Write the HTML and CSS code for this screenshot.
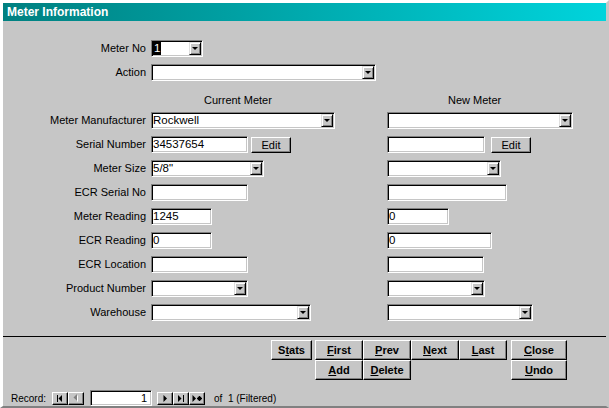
FILE: index.html
```html
<!DOCTYPE html>
<html lang="en">

<head>
    <meta charset="UTF-8">
    <meta name="viewport" content="width=device-width, initial-scale=1.0">
    <title>Meter Information</title>
    <link rel="stylesheet" href="styles.css">
</head>

<body>
    <div class="window">
        <div class="titlebar">Meter Information</div>

        <div class="form">
            <div class="label">Meter No</div>
            <div class="cell"><div class="combo w52"><span class="sel">1</span><span class="drop"></span></div></div>
            <div></div>

            <div class="label">Action</div>
            <div class="cell"><div class="combo w225"><span class="drop"></span></div></div>
            <div></div>

            <div></div>
            <div class="head head-cur">Current Meter</div>
            <div class="head head-new">New Meter</div>

            <div class="label">Meter Manufacturer</div>
            <div class="cell"><div class="combo w184"><span class="val">Rockwell</span><span class="drop"></span></div></div>
            <div class="cell"><div class="combo w186"><span class="drop"></span></div></div>

            <div class="label">Serial Number</div>
            <div class="cell"><div class="field w97">34537654</div><button class="btn edit">Edit</button></div>
            <div class="cell"><div class="field w98"></div><button class="btn edit edit-wide">Edit</button></div>

            <div class="label">Meter Size</div>
            <div class="cell"><div class="combo w113"><span class="val">5/8"</span><span class="drop"></span></div></div>
            <div class="cell"><div class="combo w114"><span class="drop"></span></div></div>

            <div class="label">ECR Serial No</div>
            <div class="cell"><div class="field w97"></div></div>
            <div class="cell"><div class="field w120"></div></div>

            <div class="label">Meter Reading</div>
            <div class="cell"><div class="field w61">1245</div></div>
            <div class="cell"><div class="field w62">0</div></div>

            <div class="label">ECR Reading</div>
            <div class="cell"><div class="field w61">0</div></div>
            <div class="cell"><div class="field w105">0</div></div>

            <div class="label">ECR Location</div>
            <div class="cell"><div class="field w97"></div></div>
            <div class="cell"><div class="field w97"></div></div>

            <div class="label">Product Number</div>
            <div class="cell"><div class="combo w97"><span class="drop"></span></div></div>
            <div class="cell"><div class="combo w98"><span class="drop"></span></div></div>

            <div class="label">Warehouse</div>
            <div class="cell"><div class="combo w160"><span class="drop"></span></div></div>
            <div class="cell"><div class="combo w146"><span class="drop"></span></div></div>
        </div>

        <div class="divider"></div>

        <div class="cmds">
            <button class="btn stats">S<u>t</u>ats</button>
            <div class="cmd-grid">
                <button class="btn"><u>F</u>irst</button>
                <button class="btn"><u>P</u>rev</button>
                <button class="btn"><u>N</u>ext</button>
                <button class="btn"><u>L</u>ast</button>
                <button class="btn"><u>A</u>dd</button>
                <button class="btn"><u>D</u>elete</button>
            </div>
            <div class="cmd-side">
                <button class="btn"><u>C</u>lose</button>
                <button class="btn"><u>U</u>ndo</button>
            </div>
        </div>

        <div class="recnav">
            <span class="rec-label">Record:</span>
            <span class="nbtn">
                <svg width="8" height="7" viewBox="0 0 8 7"><rect x="1" y="0" width="1" height="7"/><polygon points="6,0 6,7 2.5,3.5"/></svg>
            </span>
            <span class="nbtn">
                <svg width="8" height="8" viewBox="0 0 8 8"><polygon points="6,1 6,8 2.5,4.5" fill="#fff"/><polygon points="5,0 5,7 1.5,3.5" fill="#808080"/></svg>
            </span>
            <div class="field rec-input">1</div>
            <span class="nbtn">
                <svg width="8" height="7" viewBox="0 0 8 7"><polygon points="2.5,0 2.5,7 6,3.5"/></svg>
            </span>
            <span class="nbtn">
                <svg width="8" height="7" viewBox="0 0 8 7"><polygon points="1,0 1,7 4.5,3.5"/><rect x="6" y="0" width="1" height="7"/></svg>
            </span>
            <span class="nbtn">
                <svg width="10" height="7" viewBox="0 0 10 7"><polygon points="0.5,0 0.5,7 4,3.5"/><path d="M7.5 1v5M5 3.5h5M5.8 1.8l3.4 3.4M9.2 1.8l-3.4 3.4" stroke="#000" stroke-width="1.2"/></svg>
            </span>
            <span class="rec-count">of&nbsp; 1 (Filtered)</span>
        </div>
    </div>
</body>
</html>
```

FILE: styles.css
```css
body {
    margin: 0;
    font-family: 'Liberation Sans', Arial, sans-serif;
    font-size: 11px;
    color: #000;
    background: #c6c6c6;
}

.window {
    box-sizing: border-box;
    width: 609px;
    height: 408px;
    background: #c6c6c6;
    border: 3px solid;
    border-color: #fff #c6c6c6 #808080 #fff;
    border-bottom-width: 2px;
}

.titlebar {
    height: 18px;
    line-height: 18px;
    padding-left: 4px;
    background: linear-gradient(to right, #008080, #00d4dc);
    color: #fff;
    font-size: 12px;
    font-weight: bold;
}

.form {
    display: grid;
    grid-template-columns: 148px 236px 1fr;
    grid-auto-rows: 17px;
    row-gap: 7px;
    padding-top: 19px;
}

.label {
    text-align: right;
    padding-right: 5px;
    line-height: 17px;
    white-space: nowrap;
}

.cell {
    display: flex;
    align-items: center;
}

.head {
    padding-top: 6px;
    line-height: 13px;
    white-space: nowrap;
}

.head-cur {
    padding-left: 53px;
}

.head-new {
    padding-left: 61px;
}

.field,
.combo {
    box-sizing: border-box;
    height: 17px;
    background: #fff;
    border: 1px solid;
    border-color: #808080 #fff #fff #808080;
    box-shadow: inset 1px 1px #000, inset -1px -1px #c6c6c6;
    padding-left: 1px;
    line-height: 15px;
    font-size: 11.5px;
    white-space: nowrap;
}

.combo {
    display: flex;
    align-items: flex-start;
    padding-left: 0;
}

.combo .val {
    padding-left: 1px;
}

.sel {
    margin: 1px 0 0 1px;
    padding: 0 1px;
    height: 13px;
    line-height: 13px;
    background: #000;
    color: #fff;
}

.drop {
    box-sizing: border-box;
    width: 12px;
    height: 13px;
    margin: 1px 1px 0 auto;
    background: #c6c6c6;
    border: 1px solid;
    border-color: #dfdfdf #000 #000 #dfdfdf;
    box-shadow: inset 1px 1px #fff, inset -1px -1px #808080;
    display: flex;
    align-items: center;
    justify-content: center;
}

.drop::after {
    content: "";
    border-left: 3px solid transparent;
    border-right: 3px solid transparent;
    border-top: 3px solid #000;
}

.w52 { width: 52px; }
.w61 { width: 61px; }
.w62 { width: 62px; }
.w97 { width: 97px; }
.w98 { width: 98px; }
.w105 { width: 105px; }
.w113 { width: 113px; }
.w114 { width: 114px; }
.w120 { width: 120px; }
.w146 { width: 146px; }
.w160 { width: 160px; }
.w184 { width: 184px; }
.w186 { width: 186px; }
.w225 { width: 225px; }

.btn {
    box-sizing: border-box;
    padding: 0;
    background: #c6c6c6;
    border: 1px solid;
    border-color: #fff #000 #000 #fff;
    box-shadow: inset -1px -1px #808080;
    font-family: inherit;
    font-size: 11px;
    font-weight: bold;
    color: #000;
}

.edit {
    width: 40px;
    height: 16px;
    margin-left: 3px;
    font-weight: normal;
}

.edit-wide {
    margin-left: 6px;
}

.divider {
    height: 1px;
    background: #000;
    margin-top: 15px;
}

.cmds {
    display: flex;
    align-items: flex-start;
    padding-left: 268px;
    margin-top: 3px;
}

.stats {
    width: 41px;
    height: 20px;
    margin-right: 3px;
}

.cmd-grid {
    display: grid;
    grid-template-columns: repeat(4, 48px);
    grid-auto-rows: 20px;
}

.cmd-side {
    display: flex;
    flex-direction: column;
    margin-left: 4px;
}

.cmd-side .btn {
    width: 56px;
    height: 20px;
}

.recnav {
    display: flex;
    align-items: center;
    height: 16px;
    margin-top: 10px;
    padding-left: 8px;
    font-size: 10px;
}

.rec-label {
    width: 41px;
}

.nbtn {
    box-sizing: border-box;
    width: 16px;
    height: 13px;
    background: #c6c6c6;
    border: 1px solid;
    border-color: #fff #000 #000 #fff;
    box-shadow: inset -1px -1px #808080;
    display: flex;
    align-items: center;
    justify-content: center;
}

.rec-input {
    width: 62px;
    height: 16px;
    margin: 0 5px 0 6px;
    text-align: right;
    padding-right: 4px;
    line-height: 14px;
    font-size: 11px;
}

.rec-count {
    margin-left: 9px;
}
```
